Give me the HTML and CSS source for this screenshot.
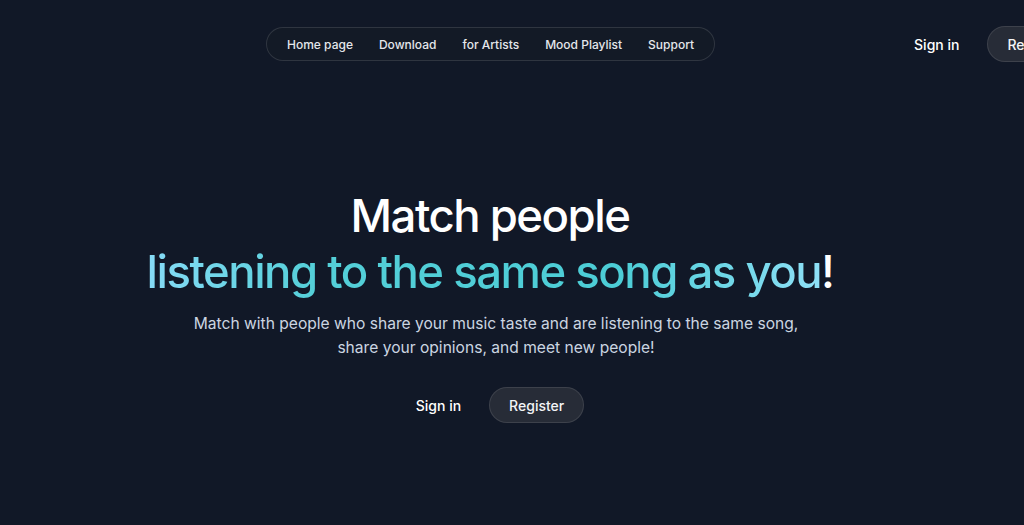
FILE: index.html
```html
<!DOCTYPE html>
<html>

<head>
    <title>Match people</title>
    <meta name="viewport" content="width=device-width, initial-scale=1">
    <link rel="stylesheet" href="styles.css">
</head>

<body>
    <div class="page">
        <header class="topbar">
            <nav class="nav-pill">
                <a href="#">Home page</a>
                <a href="#">Download</a>
                <a href="#">for Artists</a>
                <a href="#">Mood Playlist</a>
                <a href="#">Support</a>
            </nav>
            <div class="auth">
                <a href="#" class="link-btn">Sign in</a>
                <a href="#" class="pill-btn">Register</a>
            </div>
        </header>

        <main class="hero">
            <h1>
                Match people<br>
                <span class="accent">listening to the same song as you</span>!
            </h1>
            <p class="lead">
                Match with people who share your music taste and are listening to the same song,<br>
                share your opinions, and meet new people!
            </p>
            <div class="actions">
                <a href="#" class="link-btn">Sign in</a>
                <a href="#" class="pill-btn">Register</a>
            </div>
        </main>
    </div>
</body>

</html>
```

FILE: styles.css
```css
* {
    box-sizing: border-box;
    margin: 0;
    padding: 0;
}

html,
body {
    overflow: hidden;
}

body {
    font-family: Inter, "Noto Sans", sans-serif;
    background: #111827;
    color: #f9fafb;
    min-height: 100vh;
}

a {
    color: inherit;
    text-decoration: none;
}

.page {
    width: 980px;
}

/* top bar */
.topbar {
    display: flex;
    align-items: center;
    padding: 26px 0 0 266px;
    white-space: nowrap;
}

.nav-pill {
    display: flex;
    align-items: center;
    gap: 26px;
    height: 34px;
    padding: 0 20px;
    border: 1px solid rgba(255, 255, 255, 0.12);
    border-radius: 999px;
    background: #131a26;
    font-size: 12px;
    font-weight: 500;
    color: #e5e7eb;
}

.auth {
    display: flex;
    align-items: center;
    gap: 28px;
    margin-left: 199px;
}

.link-btn {
    font-size: 14px;
    font-weight: 500;
    color: #fff;
}

.pill-btn {
    display: inline-flex;
    align-items: center;
    height: 36px;
    padding: 0 19px;
    border: 1px solid rgba(255, 255, 255, 0.1);
    border-radius: 999px;
    background: #272c37;
    font-size: 14px;
    font-weight: 500;
    color: #f3f4f6;
}

/* hero */
.hero {
    display: flex;
    flex-direction: column;
    align-items: center;
    text-align: center;
    padding-top: 126px;
}

h1 {
    font-size: 45.5px;
    font-weight: 500;
    line-height: 56px;
    letter-spacing: -0.033em;
    color: #fff;
}

.accent {
    background: linear-gradient(90deg, #86dbf6 0%, #54cfd8 25%, #4ccdd6 70%, #8ee0f7 100%);
    -webkit-background-clip: text;
    background-clip: text;
    color: transparent;
}

.lead {
    margin-top: 12px;
    padding-left: 12px;
    font-size: 15.6px;
    line-height: 24px;
    color: #cbd5e1;
}

.actions {
    display: flex;
    align-items: center;
    gap: 28px;
    margin-top: 27px;
    padding-left: 20px;
}
```
